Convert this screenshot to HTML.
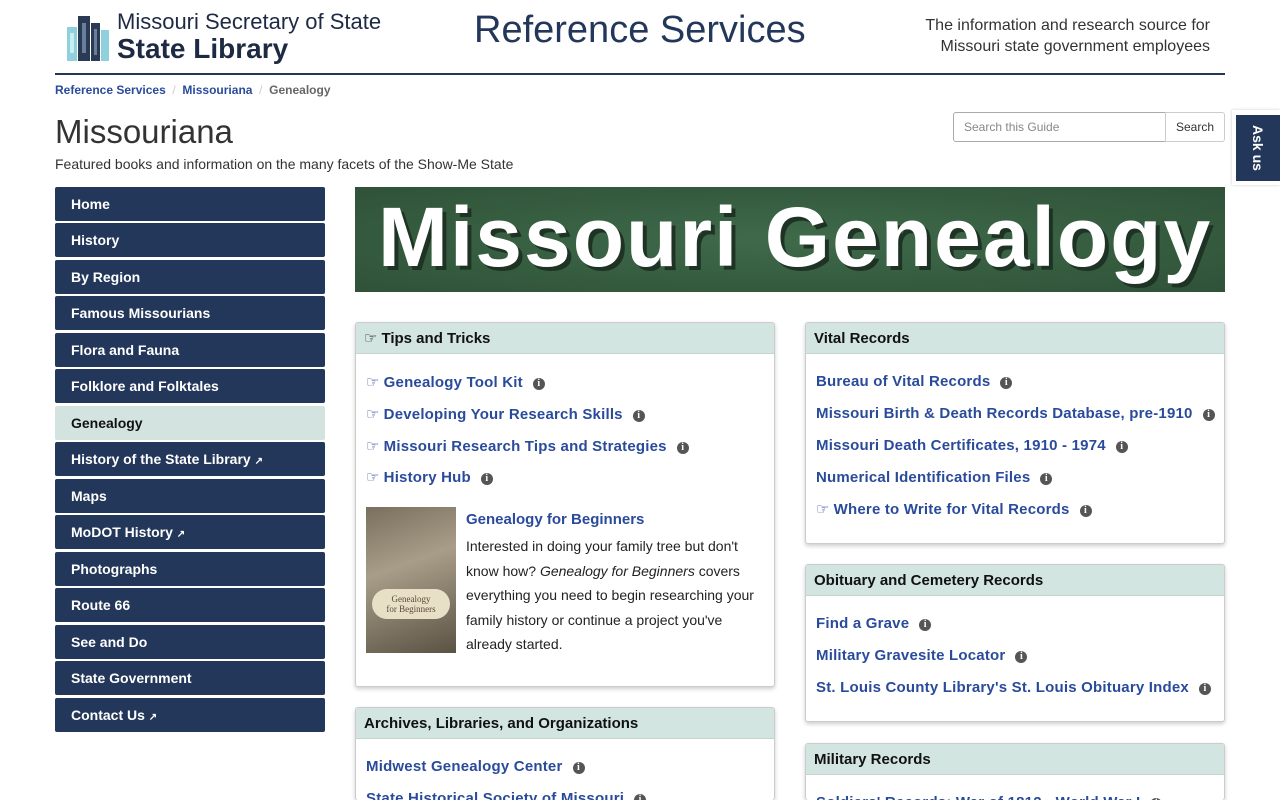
<!DOCTYPE html>
<html><head><meta charset="utf-8"><style>
*{box-sizing:border-box;margin:0;padding:0}
html,body{width:1280px;height:800px;overflow:hidden}
body{background:#fff;font-family:"Liberation Sans",Arial,sans-serif;color:#222;position:relative}
.abs{position:absolute}
.nav{position:absolute;left:55px;width:270px;height:34px;background:#23375a;color:#fff;font-weight:bold;font-size:14px;line-height:34px;padding-left:16px;border-radius:2px}
.nav.act{background:#d3e4e0;color:#111}
.panel{position:absolute;border:1px solid #ccc;border-radius:3px;box-shadow:0 2px 4px rgba(0,0,0,.2);background:#fff;overflow:hidden}
.ph{background:#d3e5e1;height:31px;border-bottom:1px solid #c5d4d0;font-weight:bold;font-size:15px;line-height:31px;padding-left:8px;color:#111}
.lk{position:absolute;left:10px;font-weight:bold;font-size:15px;color:#2a4b9b;white-space:nowrap;letter-spacing:.2px}
.i{display:inline-block;width:12px;height:12px;border-radius:50%;background:#555;color:#fff;font-size:10px;line-height:12px;text-align:center;font-family:"Liberation Serif",serif;font-weight:bold;margin-left:10px;vertical-align:1px}
.hand{display:inline-block;font-weight:normal;margin-right:4px}
</style></head><body>
<svg class="abs" style="left:66px;top:13px" width="44" height="50">
<rect x="1" y="14" width="10" height="34" fill="#8fd0dc"/><rect x="12" y="3" width="12" height="45" fill="#2a3a55"/><rect x="25" y="10" width="9" height="38" fill="#2a3a55"/><rect x="35" y="17" width="8" height="31" fill="#8fd0dc"/>
<rect x="4" y="20" width="4" height="20" fill="#c8eef3"/><rect x="16" y="10" width="4" height="30" fill="#6a7d99"/><rect x="28" y="16" width="3" height="26" fill="#6a7d99"/></svg>
<div class="abs" style="left:117px;top:9px;font-size:22px;color:#1e2a44">Missouri Secretary of State</div>
<div class="abs" style="left:117px;top:33px;font-size:28px;font-weight:bold;color:#1e2a44">State Library</div>
<div class="abs" style="left:474px;top:9px;font-size:38px;color:#23375a">Reference Services</div>
<div class="abs" style="right:70px;top:15px;font-size:16px;color:#333;text-align:right;line-height:21px">The information and research source for<br>Missouri state government employees</div>
<div class="abs" style="left:55px;top:73px;width:1170px;height:2px;background:#23375a"></div>
<div class="abs" style="left:55px;top:83px;font-size:12px;font-weight:bold;color:#2a4b9b">Reference Services <span style="color:#ccc;font-weight:normal">&nbsp;/&nbsp;</span> Missouriana <span style="color:#ccc;font-weight:normal">&nbsp;/&nbsp;</span> <span style="color:#666">Genealogy</span></div>
<div class="abs" style="left:55px;top:113px;font-size:33px;color:#333">Missouriana</div>
<div class="abs" style="left:55px;top:156px;font-size:14px;color:#333">Featured books and information on the many facets of the Show-Me State</div>
<div class="abs" style="left:953px;top:112px;width:213px;height:30px;border:1px solid #aaa;border-radius:3px 0 0 3px;font-size:12px;color:#888;padding:7px 10px">Search this Guide</div>
<div class="abs" style="left:1165px;top:112px;width:60px;height:30px;border:1px solid #ccc;border-radius:0 3px 3px 0;font-size:12px;color:#333;padding:7px 0;text-align:center">Search</div>
<div class="abs" style="left:1232px;top:110px;width:48px;height:75px;background:#fff;box-shadow:0 0 3px rgba(0,0,0,.2)"></div>
<div class="abs" style="left:1236px;top:115px;width:44px;height:66px;background:#23375a"></div>
<div class="abs" style="left:1236px;top:115px;width:44px;height:66px;color:#fff;font-weight:bold;font-size:14px;writing-mode:vertical-rl;text-align:center;line-height:44px">Ask us</div>

<div class="nav" style="top:187px">Home</div>
<div class="nav" style="top:223px">History</div>
<div class="nav" style="top:260px">By Region</div>
<div class="nav" style="top:296px">Famous Missourians</div>
<div class="nav" style="top:333px">Flora and Fauna</div>
<div class="nav" style="top:369px">Folklore and Folktales</div>
<div class="nav act" style="top:406px">Genealogy</div>
<div class="nav" style="top:442px">History of the State Library <span style="font-size:10px">↗</span></div>
<div class="nav" style="top:479px">Maps</div>
<div class="nav" style="top:515px">MoDOT History <span style="font-size:10px">↗</span></div>
<div class="nav" style="top:552px">Photographs</div>
<div class="nav" style="top:588px">Route 66</div>
<div class="nav" style="top:625px">See and Do</div>
<div class="nav" style="top:661px">State Government</div>
<div class="nav" style="top:698px">Contact Us <span style="font-size:10px">↗</span></div>

<div class="abs" style="left:355px;top:187px;width:870px;height:105px;background:radial-gradient(ellipse at center,#3f6a4a,#2f5238);overflow:hidden">
<div style="position:absolute;left:23px;top:2px;font-size:84px;font-weight:bold;color:#fff;letter-spacing:2px;text-shadow:4px 4px 0 #1f3325;white-space:nowrap">Missouri Genealogy</div></div>

<div class="panel" style="left:355px;top:322px;width:420px;height:365px">
<div class="ph"><span class="hand">☞</span>Tips and Tricks</div>
<div class="lk" style="top:50px"><span class="hand">☞</span>Genealogy Tool Kit<span class="i">i</span></div>
<div class="lk" style="top:82px"><span class="hand">☞</span>Developing Your Research Skills<span class="i">i</span></div>
<div class="lk" style="top:114px"><span class="hand">☞</span>Missouri Research Tips and Strategies<span class="i">i</span></div>
<div class="lk" style="top:145px"><span class="hand">☞</span>History Hub<span class="i">i</span></div>
<div class="abs" style="left:10px;top:184px;width:90px;height:146px;background:linear-gradient(160deg,#7a6f5e,#a89d88 40%,#5a5244);">
<div style="position:absolute;left:6px;top:82px;width:78px;height:30px;border-radius:15px;background:#e8dfc7;font-family:'Liberation Serif',serif;font-size:9px;color:#5a4a35;text-align:center;line-height:10px;padding-top:5px">Genealogy<br>for Beginners</div></div>
<div class="lk" style="left:110px;top:188px;letter-spacing:0;font-size:15px">Genealogy for Beginners</div>
<div class="abs" style="left:110px;top:211px;width:300px;font-size:14px;line-height:24.5px;color:#222">Interested in doing your family tree but don't know how? <i>Genealogy for Beginners</i> covers everything you need to begin researching your family history or continue a project you've already started.</div>
</div>

<div class="panel" style="left:355px;top:707px;width:420px;height:93px;border-bottom:none">
<div class="ph">Archives, Libraries, and Organizations</div>
<div class="lk" style="top:50px">Midwest Genealogy Center<span class="i">i</span></div>
<div class="lk" style="top:82px">State Historical Society of Missouri<span class="i">i</span></div>
</div>

<div class="panel" style="left:805px;top:322px;width:420px;height:222px">
<div class="ph">Vital Records</div>
<div class="lk" style="top:50px">Bureau of Vital Records<span class="i">i</span></div>
<div class="lk" style="top:82px">Missouri Birth &amp; Death Records Database, pre-1910<span class="i">i</span></div>
<div class="lk" style="top:114px">Missouri Death Certificates, 1910 - 1974<span class="i">i</span></div>
<div class="lk" style="top:146px">Numerical Identification Files<span class="i">i</span></div>
<div class="lk" style="top:177px"><span class="hand">☞</span>Where to Write for Vital Records<span class="i">i</span></div>
</div>

<div class="panel" style="left:805px;top:564px;width:420px;height:158px">
<div class="ph">Obituary and Cemetery Records</div>
<div class="lk" style="top:50px">Find a Grave<span class="i">i</span></div>
<div class="lk" style="top:82px">Military Gravesite Locator<span class="i">i</span></div>
<div class="lk" style="top:114px">St. Louis County Library's St. Louis Obituary Index<span class="i">i</span></div>
</div>

<div class="panel" style="left:805px;top:743px;width:420px;height:57px;border-bottom:none">
<div class="ph">Military Records</div>
<div class="lk" style="top:50px">Soldiers' Records: War of 1812 - World War I<span class="i">i</span></div>
</div>
</body></html>
